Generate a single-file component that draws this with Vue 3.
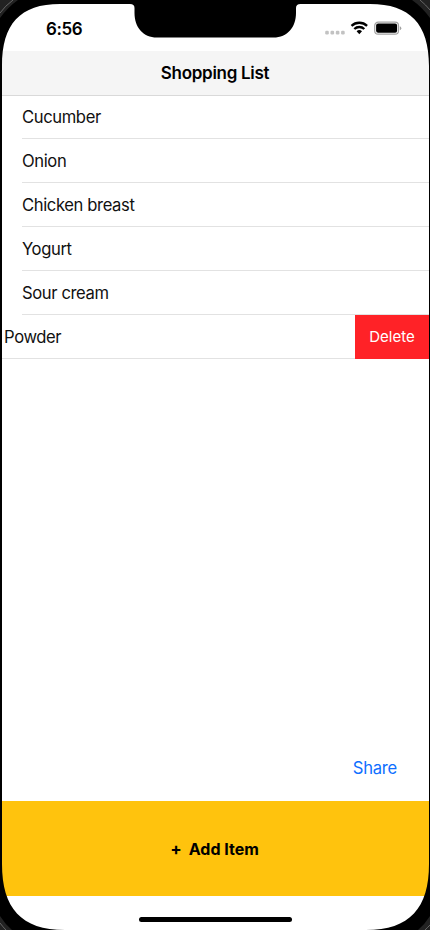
<script setup>
import { ref } from 'vue'

const items = ref(['Cucumber', 'Onion', 'Chicken breast', 'Yogurt', 'Sour cream'])
</script>

<template>
  <div class="phone">
    <main class="screen">
      <div class="status">
        <span class="time">6:56</span>
        <svg class="indicators" width="78" height="16" viewBox="0 0 78 16">
          <g fill="#c2c2c2">
            <rect x="1.2" y="9.8" width="3.6" height="3.6" rx="1.2" />
            <rect x="6.5" y="9.8" width="3.6" height="3.6" rx="1.2" />
            <rect x="11.8" y="9.8" width="3.6" height="3.6" rx="1.2" />
            <rect x="17.1" y="9.8" width="3.6" height="3.6" rx="1.2" />
          </g>
          <g fill="none" stroke="#000" stroke-width="2.3">
            <path d="M27.5 4.9a11.2 11.2 0 0 1 15.6 0" />
            <path d="M30.3 8a7.2 7.2 0 0 1 10 0" />
          </g>
          <path d="M32.6 10.2a4 4 0 0 1 5.4 0L35.3 13.2z" />
          <rect x="50.7" y="1.2" width="23.8" height="12" rx="3.5" fill="#fff" stroke="#a2a2a2" stroke-width="1.2" />
          <rect x="52.1" y="2.6" width="21" height="9.2" rx="2" />
          <path d="M75.8 5.2q1.5.6 1.5 2t-1.5 2z" fill="#a2a2a2" />
        </svg>
      </div>
      <header class="navbar"><h1 class="title">Shopping List</h1></header>
      <ul class="list">
        <li v-for="item in items" :key="item" class="row"><span class="label">{{ item }}</span></li>
        <li class="row swiped">
          <span class="label">Powder</span>
          <button class="delete">Delete</button>
        </li>
      </ul>
      <div class="share-area"><a class="share">Share</a></div>
      <button class="add"><span class="plus">+</span><span class="add-label">Add Item</span></button>
      <footer class="home"><span class="home-bar"></span></footer>
    </main>
    <svg class="bezel" width="430" height="930" viewBox="0 0 430 930">
      <path
        fill="#000" fill-rule="evenodd"
        d="M0 0H430V930H0Z M60 4H130Q134.500 4 134.500 8V13C134.500 27 143 37.500 157 37.500H273.500C287.500 37.500 296 27 296 13V8Q296 4 300.500 4H370C410 4 429 24 429 66V864C429 908 410 930 366 930H65C21 930 2 908 2 864V66C2 24 20 4 60 4Z"
      />
      <g fill="#222">
        <path d="M0 0H18Q8 7 0 18Z" />
        <path d="M430 0H412Q422 7 430 18Z" />
        <path d="M0 930H12Q5 924 0 916Z" />
        <path d="M430 930H418Q425 924 430 916Z" />
      </g>
      <g fill="none" stroke="#777" stroke-width="0.8">
        <path d="M0 13Q5 6 13 0" />
        <path d="M430 10Q426 5 420 0" />
        <path d="M0 923Q3 927 6 930" />
        <path d="M430 925Q427 928 425 930" />
      </g>
    </svg>
  </div>
</template>

<style>
body { margin: 0; background: #000; }
</style>

<style scoped>
.phone {
  position: relative;
  width: 430px;
  height: 930px;
  overflow: hidden;
  background: #000;
  color: #000;
  font-family: Inter, "Liberation Sans", sans-serif;
}
.screen {
  display: flex;
  flex-direction: column;
  box-sizing: border-box;
  height: 930px;
  margin: 0 1px 0 2px;
  background: #fff;
}
.bezel { position: absolute; inset: 0; pointer-events: none; }
.status {
  display: flex;
  justify-content: space-between;
  box-sizing: border-box;
  height: 51px;
  padding: 18px 27px 0 44px;
}
.time { margin-top: 1px; font-size: 17px; font-weight: 600; line-height: 21px; letter-spacing: -0.4px; }
.indicators { margin-top: 3px; }
.navbar {
  box-sizing: border-box;
  height: 45px;
  background: #f5f5f5;
  border-bottom: 1px solid #d9d9d9;
}
.title {
  margin: 0;
  padding-right: 1px;
  font-size: 17px;
  font-weight: 600;
  line-height: 44px;
  letter-spacing: -0.3px;
  text-align: center;
}
.list { margin: 0; padding: 0; list-style: none; }
.row {
  display: flex;
  box-sizing: border-box;
  height: 44px;
  margin-left: 20px;
  border-bottom: 1px solid #e2e2e2;
  font-size: 16.6px;
  line-height: 45px;
  letter-spacing: -0.38px;
  color: #111;
}
.row:first-child { height: 43px; line-height: 43px; }
.swiped { justify-content: space-between; margin-left: 0; padding-left: 2px; }
.delete {
  width: 74px;
  height: 44px;
  padding: 0;
  border: 0;
  background: #ff2227;
  color: #fff;
  font: 400 15px/44px Inter, sans-serif;
}
.share-area { flex: 1; display: flex; justify-content: flex-end; align-items: flex-end; padding: 0 32px 22px 0; }
.share { color: #0f6fff; font-size: 16.6px; line-height: 22px; letter-spacing: -0.25px; }
.add {
  display: flex;
  align-items: center;
  justify-content: center;
  gap: 7px;
  height: 95px;
  padding: 0 2px 0 0;
  border: 0;
  background: #ffc30d;
  color: #000;
  font: 700 16px/20px Inter, sans-serif;
}
.plus { font-size: 17px; }
.home { display: flex; justify-content: center; height: 34px; }
.home-bar { width: 153px; height: 5px; margin-top: 21px; border-radius: 3px; background: #000; }
</style>
